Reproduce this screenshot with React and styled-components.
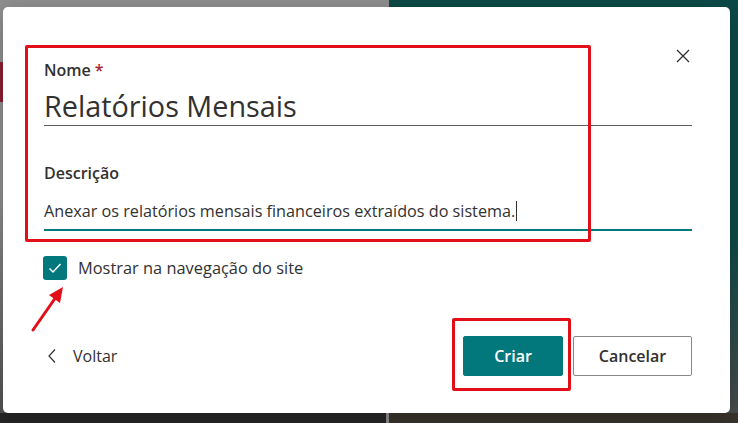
import React from "react";
import styled, { createGlobalStyle } from "styled-components";

const teal = "#03787c";
const ink = "#323130";
const marker = "#e20f18";

const GlobalStyle = createGlobalStyle`
  body {
    margin: 0;
    font-family: "Open Sans", "Noto Sans", sans-serif;
    color: ${ink};
  }
  * { box-sizing: border-box; }
`;

const Backdrop = styled.div`
  width: 738px;
  height: 423px;
  padding: 7px 8px 10px 3px;
  overflow: hidden;
  background:
    linear-gradient(to right, transparent 0 386px, #8c8c8c 386px 389px, transparent 389px) bottom / 100% 10px no-repeat,
    linear-gradient(to right, #262626 0 386px, #38332c 389px) bottom / 100% 10px no-repeat,
    linear-gradient(#8b2030, #8b2030) 0 62px / 3px 40px no-repeat,
    linear-gradient(to bottom, #8f8f8f 0 45%, #505050 100%) left / 389px 100% no-repeat,
    linear-gradient(to bottom, #0c4a47 0 55%, #4b4b4b 100%) right / 349px 100% no-repeat;
`;

const Dialog = styled.div`
  position: relative;
  height: 100%;
  background: #fff;
  border-radius: 5px;
  box-shadow: 0 6px 24px rgba(0, 0, 0, 0.22);
  padding: 42px 38px 37px 41px;
  display: flex;
  flex-direction: column;
`;

const Header = styled.div`
  display: flex;
  justify-content: space-between;
  align-items: flex-start;
`;

const Label = styled.div`
  margin-top: ${(p) => p.$top || 0}px;
  font-size: 16px;
  line-height: 22px;
  font-weight: 550;
`;

const Required = styled.span`
  color: #a4262c;
  margin-left: 4px;
`;

const CloseButton = styled.button`
  width: 14px;
  height: 14px;
  margin-right: 2px;
  padding: 0;
  border: none;
  background: none;
  display: flex;
  cursor: pointer;
`;

const NameValue = styled.div`
  margin-top: 6px;
  font-size: 28.8px;
  line-height: 38px;
  border-bottom: 1px solid #605e5c;
  white-space: nowrap;
`;

const DescValue = styled.div`
  margin-top: 16px;
  font-size: 16.2px;
  line-height: 22px;
  padding-bottom: 7px;
  border-bottom: 2px solid ${teal};
  white-space: nowrap;
  display: flex;
  align-items: center;
`;

const Caret = styled.span`
  display: inline-block;
  width: 1px;
  height: 20px;
  margin-left: 1px;
  background: ${ink};
`;

const CheckRow = styled.label`
  margin-top: 25px;
  display: flex;
  align-items: center;
  gap: 11px;
  font-size: 16.4px;
  line-height: 22px;
`;

const CheckBox = styled.span`
  width: 24px;
  height: 24px;
  border-radius: 3px;
  background: ${teal};
  display: flex;
  align-items: center;
  justify-content: center;
  margin-left: -1px;
`;

const Footer = styled.div`
  margin-top: auto;
  display: flex;
  align-items: center;
  justify-content: space-between;
`;

const BackLink = styled.button`
  display: flex;
  align-items: center;
  gap: 17px;
  padding: 0 0 0 4px;
  border: none;
  background: none;
  font-family: inherit;
  font-size: 16px;
  line-height: 22px;
  color: ${ink};
  cursor: pointer;
`;

const Actions = styled.div`
  display: flex;
  gap: 10px;
`;

const Button = styled.button`
  height: 40px;
  width: ${(p) => p.$w}px;
  border-radius: 2px;
  font-family: inherit;
  font-size: 16px;
  font-weight: 600;
  cursor: pointer;
  border: 1px solid ${(p) => (p.$primary ? teal : "#8a8886")};
  background: ${(p) => (p.$primary ? teal : "#fff")};
  color: ${(p) => (p.$primary ? "#fff" : ink)};
`;

const Highlight = styled.div`
  position: absolute;
  left: ${(p) => p.$x}px;
  top: ${(p) => p.$y}px;
  width: ${(p) => p.$w}px;
  height: ${(p) => p.$h}px;
  border: 3px solid ${marker};
  border-radius: 2px;
  pointer-events: none;
`;

const Arrow = styled.svg`
  position: absolute;
  left: 23px;
  top: 270px;
  pointer-events: none;
`;

export default function App() {
  return (
    <>
      <GlobalStyle />
      <Backdrop>
        <Dialog>
          <Header>
            <Label $top={10}>
              Nome<Required>*</Required>
            </Label>
            <CloseButton aria-label="Fechar">
              <svg width="14" height="14" viewBox="0 0 14 14">
                <path d="M1 1 13 13M13 1 1 13" stroke={ink} strokeWidth="1.3" fill="none" />
              </svg>
            </CloseButton>
          </Header>
          <NameValue>Relatórios Mensais</NameValue>

          <Label $top={36}>Descrição</Label>
          <DescValue>
            Anexar os relatórios mensais financeiros extraídos do sistema.
            <Caret />
          </DescValue>

          <CheckRow>
            <CheckBox>
              <svg width="14" height="12" viewBox="0 0 14 12">
                <path d="M1.5 6.5 5 10 12.5 2" stroke="#fff" strokeWidth="1.5" fill="none" />
              </svg>
            </CheckBox>
            Mostrar na navegação do site
          </CheckRow>

          <Footer>
            <BackLink>
              <svg width="8" height="14" viewBox="0 0 8 14">
                <path d="M7 0.5 1 7 7 13.5" stroke={ink} strokeWidth="1.2" fill="none" />
              </svg>
              Voltar
            </BackLink>
            <Actions>
              <Button $primary $w={100}>Criar</Button>
              <Button $w={119}>Cancelar</Button>
            </Actions>
          </Footer>

          <Highlight $x={22} $y={38} $w={566} $h={197} />
          <Highlight $x={449} $y={311} $w={119} $h={73} />
          <Arrow width="44" height="60" viewBox="0 0 44 60">
            <path d="M7 53 L30 20" stroke={marker} strokeWidth="3" strokeLinecap="round" />
            <path d="M37 10 L23 18 L34 26 Z" fill={marker} />
          </Arrow>
        </Dialog>
      </Backdrop>
    </>
  );
}
